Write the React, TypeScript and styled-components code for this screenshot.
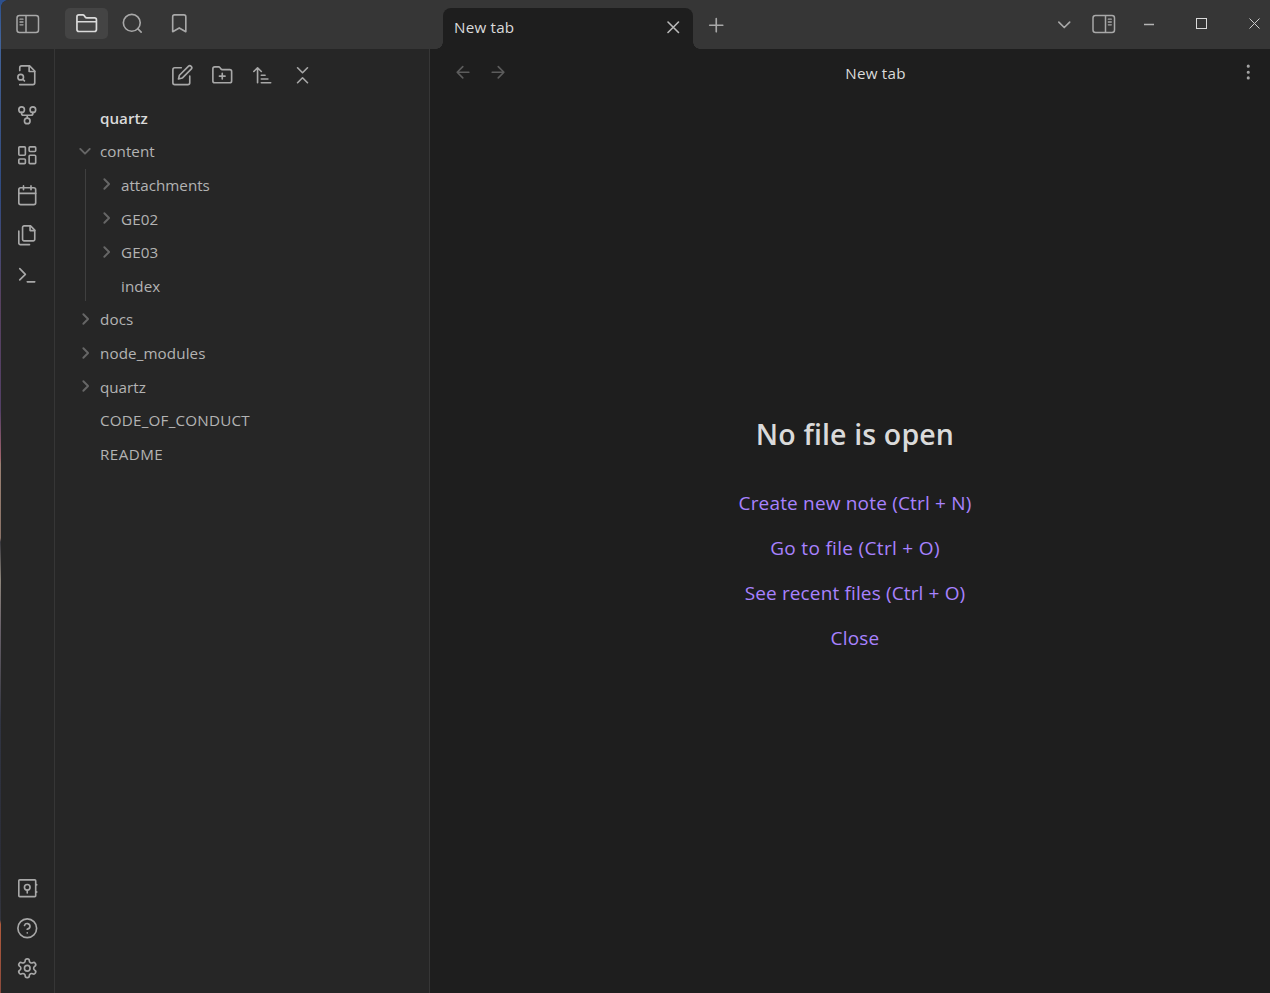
import React from 'react';
import styled, { createGlobalStyle } from 'styled-components';

const GlobalStyle = createGlobalStyle`
  * { box-sizing: border-box; }
  body {
    margin: 0;
    overflow: hidden;
    background: #262626;
    font-family: 'Open Sans', 'Noto Sans', sans-serif;
    font-size: 15.2px;
    color: #b3b3b3;
  }
`;

const Desktop = styled.div`
  width: 1270px;
  height: 993px;
  padding-left: 1px;
  background: linear-gradient(
    #2c4f8c 0, #41639a 40px, #3c5585 110px, #2f4a80 190px, #454873 250px,
    #57415f 300px, #533f66 410px, #a0626b 458px, #9a8072 464px, #8a7267 538px,
    #37373d 542px, #8d857b 580px, #68606a 630px, #4a4850 680px, #303442 720px,
    #2b2d38 860px, #33353f 920px, #b05a3c 924px, #8a4a3c 993px
  );
`;

const Window = styled.div`
  height: 100%;
  display: flex;
  flex-direction: column;
  border-top-left-radius: 8px;
  overflow: hidden;
  background: #262626;
`;

const TitleBar = styled.header`
  display: flex;
  flex: none;
  height: 49px;
  background: #363636;
`;

const SidebarTabs = styled.div`
  display: flex;
  align-items: flex-start;
  width: 429px;
  padding: 8px 0 0 5px;
`;

const BarButton = styled.button<{ $w: number; $active?: boolean; $color?: string; $ml?: number; $drop?: number }>`
  display: flex;
  flex: none;
  align-items: center;
  justify-content: center;
  width: ${p => p.$w}px;
  height: 31px;
  margin: 0 0 0 ${p => p.$ml ?? 0}px;
  padding: ${p => p.$drop ?? 0}px 0 0;
  border: 0;
  border-radius: 5px;
  background: ${p => (p.$active ? '#444444' : 'transparent')};
  color: ${p => p.$color ?? '#a8a8a8'};
`;

const TabStrip = styled.div`
  display: flex;
  flex: 1;
  align-items: flex-start;
  padding: 8px 0 0 13px;
`;

const Tab = styled.div`
  position: relative;
  display: flex;
  align-items: center;
  justify-content: space-between;
  width: 250px;
  height: 41px;
  padding: 0 9px 3px 11px;
  border-radius: 8px 8px 0 0;
  background: #1e1e1e;
  color: #dadada;

  svg { color: #b8b8b8; }

  &::before, &::after {
    content: '';
    position: absolute;
    bottom: 0;
    width: 7px;
    height: 7px;
  }
  &::before {
    right: 100%;
    background: radial-gradient(circle at 0 0, transparent 6.5px, #1e1e1e 7px);
  }
  &::after {
    left: 100%;
    background: radial-gradient(circle at 100% 0, transparent 6.5px, #1e1e1e 7px);
  }
`;

const Spacer = styled.div`flex: 1;`;

const Body = styled.div`
  display: flex;
  flex: 1;
  min-height: 0;
`;

const Ribbon = styled.nav`
  display: flex;
  flex-direction: column;
  align-items: center;
  width: 54px;
  padding: 6.4px 1.5px 5.2px 0;
  border-right: 1px solid #363636;
  color: #a8a8a8;
`;

const RibbonItem = styled.div`
  display: flex;
  align-items: center;
  justify-content: center;
  height: 40px;
`;

const Explorer = styled.aside`
  width: 375px;
  border-right: 1px solid #363636;
`;

const ExplorerTools = styled.div`
  display: flex;
  justify-content: center;
  gap: 17.6px;
  padding: 15px 0 0 0.5px;
  height: 52px;
  color: #a8a8a8;
`;

const VaultName = styled.div`
  height: 33.6px;
  padding-left: 45px;
  line-height: 34px;
  font-weight: 600;
  color: #dadada;
`;

const TreeRow = styled.div<{ $track?: number }>`
  display: flex;
  align-items: center;
  height: 33.6px;
  padding-left: 20px;
  letter-spacing: ${p => p.$track ?? 0}px;
  white-space: nowrap;
`;

const Chevron = styled.span`
  display: flex;
  width: 25px;
  height: 20px;
  margin-top: -1px;
  color: #666666;
`;

const Children = styled.div`
  display: flow-root;
  margin: 1px 0 1.5px 30px;
  height: 132px;
  border-left: 1px solid #3f3f3f;

  ${TreeRow} {
    padding-left: 10px;
  }
  ${TreeRow}:first-child {
    margin-top: -1px;
  }
`;

const Main = styled.main`
  display: flex;
  flex: 1;
  flex-direction: column;
  background: #1e1e1e;
`;

const ViewHeader = styled.div`
  display: grid;
  grid-template-columns: 100px 1fr 60px;
  align-items: center;
  height: 49px;
  padding: 0 10.5px 0 21.5px;
  color: #a6a6a6;
`;

const Nav = styled.div`
  display: flex;
  gap: 12.5px;
  margin-top: -3px;
  color: #5c5c5c;
`;

const ViewTitle = styled.div`
  margin-top: -2px;
  text-align: center;
  color: #dadada;
  letter-spacing: 0.22px;
`;

const More = styled.div`
  display: flex;
  justify-content: flex-end;
  margin-top: -3px;
`;

const Empty = styled.div`
  display: flex;
  flex-direction: column;
  align-items: center;
  padding: 313px 0 0 10px;
`;

const Heading = styled.h1`
  margin: 0 0 24px;
  height: 46px;
  line-height: 46px;
  font-size: 28.5px;
  font-weight: 600;
  letter-spacing: 0.15px;
  color: #dadada;
`;

const Action = styled.a<{ $track: number }>`
  height: 45px;
  line-height: 45px;
  font-size: 19px;
  letter-spacing: ${p => p.$track}px;
  color: #a882ff;
`;

const Label = styled.span<{ $track: number }>`
  letter-spacing: ${p => p.$track}px;
`;

function Icon({ size = 22.5, stroke = 1.75, children }: { size?: number; stroke?: number; children: React.ReactNode }) {
  return (
    <svg width={size} height={size} viewBox="0 0 24 24" fill="none" stroke="currentColor" strokeWidth={stroke} strokeLinecap="round" strokeLinejoin="round">
      {children}
    </svg>
  );
}

function SidebarToggle({ right }: { right?: boolean }) {
  return (
    <svg width="24" height="20" viewBox="0 0 24 20" fill="none" stroke="currentColor" strokeWidth="1.5" strokeLinecap="round">
      <rect x="1" y="1.5" width="21.5" height="17" rx="2.5" />
      <path d={right ? 'M13.5 2v16' : 'M10 2v16'} />
      <path strokeWidth="1.3" d={right ? 'M16.3 5.2h3M16.3 8h3M16.3 10.8h3' : 'M4 5.2h3M4 8h3M4 10.8h3'} />
    </svg>
  );
}

const ribbonTop = [
  <>
    <path d="M4 22h14a2 2 0 0 0 2-2V7.5L14.5 2H6a2 2 0 0 0-2 2v3" />
    <path d="M14 2v6h6" />
    <circle cx="5" cy="14" r="3" />
    <path d="m9 18-1.5-1.5" />
  </>,
  <>
    <circle cx="12" cy="18" r="3" />
    <circle cx="6" cy="6" r="3" />
    <circle cx="18" cy="6" r="3" />
    <path d="M18 9v1a2 2 0 0 1-2 2H8a2 2 0 0 1-2-2V9M12 12v3" />
  </>,
  <>
    <rect x="3" y="3" width="7" height="9" rx="1" />
    <rect x="14" y="3" width="7" height="5" rx="1" />
    <rect x="14" y="12" width="7" height="9" rx="1" />
    <rect x="3" y="16" width="7" height="5" rx="1" />
  </>,
  <>
    <rect x="3" y="4" width="18" height="18" rx="2" />
    <path d="M16 2v4M8 2v4M3 10h18" />
  </>,
  <>
    <path d="M15.5 2H8.6c-.4 0-.8.2-1.1.5-.3.3-.5.7-.5 1.1v12.8c0 .4.2.8.5 1.1.3.3.7.5 1.1.5h9.8c.4 0 .8-.2 1.1-.5.3-.3.5-.7.5-1.1V6.5L15.5 2z" />
    <path d="M3 7.6v12.8c0 .4.2.8.5 1.1.3.3.7.5 1.1.5h9.8M15 2v5h5" />
  </>,
  <path d="m4 17 6-6-6-6M12 19h8" />,
];

const ribbonBottom = [
  <>
    <rect x="3" y="3" width="18" height="18" rx="1" />
    <circle cx="12" cy="11" r="3" />
    <path d="M12 14v3M22 8v.5M22 15.8v.5" />
  </>,
  <>
    <circle cx="12" cy="12" r="10" />
    <path d="M9.09 9a3 3 0 0 1 5.83 1c0 2-3 3-3 3M12 17h.01" />
  </>,
  <>
    <path d="M12.22 2h-.44a2 2 0 0 0-2 2v.18a2 2 0 0 1-1 1.73l-.43.25a2 2 0 0 1-2 0l-.15-.08a2 2 0 0 0-2.73.73l-.22.38a2 2 0 0 0 .73 2.73l.15.1a2 2 0 0 1 1 1.72v.51a2 2 0 0 1-1 1.74l-.15.09a2 2 0 0 0-.73 2.73l.22.38a2 2 0 0 0 2.73.73l.15-.08a2 2 0 0 1 2 0l.43.25a2 2 0 0 1 1 1.73V20a2 2 0 0 0 2 2h.44a2 2 0 0 0 2-2v-.18a2 2 0 0 1 1-1.73l.43-.25a2 2 0 0 1 2 0l.15.08a2 2 0 0 0 2.73-.73l.22-.39a2 2 0 0 0-.73-2.73l-.15-.08a2 2 0 0 1-1-1.74v-.5a2 2 0 0 1 1-1.74l.15-.09a2 2 0 0 0 .73-2.73l-.22-.38a2 2 0 0 0-2.73-.73l-.15.08a2 2 0 0 1-2 0l-.43-.25a2 2 0 0 1-1-1.73V4a2 2 0 0 0-2-2z" />
    <circle cx="12" cy="12" r="3" />
  </>,
];

type Item = { name: string; state?: 'open' | 'closed'; track?: number };

function Row({ name, state, track }: Item) {
  return (
    <TreeRow $track={track}>
      <Chevron>
        {state && (
          <Icon size={20} stroke={2.3}>
            <path d={state === 'open' ? 'm6.3 9.5 5.7 5.7 5.7-5.7' : 'm10 17.7 5.7-5.7L10 6.3'} />
          </Icon>
        )}
      </Chevron>
      {name}
    </TreeRow>
  );
}

export default function App() {
  return (
    <>
      <GlobalStyle />
      <Desktop>
        <Window>
          <TitleBar>
            <SidebarTabs>
              <BarButton $w={43}><SidebarToggle /></BarButton>
              <BarButton $w={43} $active $color="#dadada" $ml={16}>
                <Icon size={23.4}>
                  <path d="M4 20h16a2 2 0 0 0 2-2V8a2 2 0 0 0-2-2h-7.93a2 2 0 0 1-1.66-.9l-.82-1.2A2 2 0 0 0 7.93 3H4a2 2 0 0 0-2 2v13c0 1.1.9 2 2 2ZM2 10h20" />
                </Icon>
              </BarButton>
              <BarButton $w={43} $ml={3}>
                <Icon><circle cx="11.5" cy="11.5" r="9" /><path d="m21.5 21.5-3.7-3.7" /></Icon>
              </BarButton>
              <BarButton $w={43} $ml={3.5}>
                <Icon><path d="m19 21-7-4-7 4V5a2 2 0 0 1 2-2h10a2 2 0 0 1 2 2v16z" /></Icon>
              </BarButton>
            </SidebarTabs>
            <TabStrip>
              <Tab>
                <Label $track={0.22}>New tab</Label>
                <Icon><path d="m17.6 6.4-11.2 11.2M6.4 6.4l11.2 11.2" /></Icon>
              </Tab>
              <BarButton $w={31} $ml={8} $drop={3}><Icon><path d="M12 5v14M5 12h14" /></Icon></BarButton>
              <Spacer />
              <BarButton $w={31} $drop={1}><Icon><path d="m6.2 9.7 5.8 5.8 5.8-5.8" /></Icon></BarButton>
              <BarButton $w={31} $ml={9}><SidebarToggle right /></BarButton>
              <BarButton $w={46} $ml={6.5} $color="#b5b5b5">
                <svg width="10" height="10"><path d="M0 5.5h10" stroke="currentColor" strokeWidth="1.5" /></svg>
              </BarButton>
              <BarButton $w={46} $ml={6.5} $color="#dadada">
                <svg width="11" height="11"><rect x=".5" y=".5" width="10" height="10" fill="none" stroke="currentColor" /></svg>
              </BarButton>
              <BarButton $w={32} $ml={13.5} $color="#cccccc">
                <svg width="11" height="11"><path d="m.5.5 10 10m0-10-10 10" stroke="currentColor" /></svg>
              </BarButton>
            </TabStrip>
          </TitleBar>
          <Body>
            <Ribbon>
              {ribbonTop.map((d, i) => <RibbonItem key={i}><Icon>{d}</Icon></RibbonItem>)}
              <Spacer />
              {ribbonBottom.map((d, i) => <RibbonItem key={i}><Icon>{d}</Icon></RibbonItem>)}
            </Ribbon>
            <Explorer>
              <ExplorerTools>
                <Icon><path d="M11 4H4a2 2 0 0 0-2 2v14a2 2 0 0 0 2 2h14a2 2 0 0 0 2-2v-7M18.5 2.5a2.12 2.12 0 0 1 3 3L12 15l-4 1 1-4Z" /></Icon>
                <Icon><path d="M4 20h16a2 2 0 0 0 2-2V8a2 2 0 0 0-2-2h-7.93a2 2 0 0 1-1.66-.9l-.82-1.2A2 2 0 0 0 7.93 3H4a2 2 0 0 0-2 2v13c0 1.1.9 2 2 2ZM12 10v6M9 13h6" /></Icon>
                <Icon><path d="m3 8 4-4 4 4M7 4v16M11 12h4M11 16h7M11 20h10" /></Icon>
                <Icon><path d="m7 20 5.3-5.3 5.3 5.3M7 4l5.3 5.3L17.6 4" /></Icon>
              </ExplorerTools>
              <VaultName>quartz</VaultName>
              <Row name="content" state="open" track={0.05} />
              <Children>
                <Row name="attachments" state="closed" />
                <Row name="GE02" state="closed" track={0.1} />
                <Row name="GE03" state="closed" track={0.1} />
                <Row name="index" track={0.1} />
              </Children>
              <Row name="docs" state="closed" track={0.1} />
              <Row name="node_modules" state="closed" track={0.1} />
              <Row name="quartz" state="closed" />
              <Row name="CODE_OF_CONDUCT" track={0.22} />
              <Row name="README" track={0.45} />
            </Explorer>
            <Main>
              <ViewHeader>
                <Nav>
                  <Icon><path d="m11.5 18-6-6 6-6M18 12H5.5" /></Icon>
                  <Icon><path d="M5.5 12H18M12 6l6 6-6 6" /></Icon>
                </Nav>
                <ViewTitle>New tab</ViewTitle>
                <More>
                  <Icon stroke={1.5}>
                    <circle cx="12" cy="5.5" r=".9" /><circle cx="12" cy="12" r=".9" /><circle cx="12" cy="18" r=".9" />
                  </Icon>
                </More>
              </ViewHeader>
              <Empty>
                <Heading>No file is open</Heading>
                <Action $track={0.18}>Create new note (Ctrl + N)</Action>
                <Action $track={0.32}>Go to file (Ctrl + O)</Action>
                <Action $track={0.14}>See recent files (Ctrl + O)</Action>
                <Action $track={0.2}>Close</Action>
              </Empty>
            </Main>
          </Body>
        </Window>
      </Desktop>
    </>
  );
}
